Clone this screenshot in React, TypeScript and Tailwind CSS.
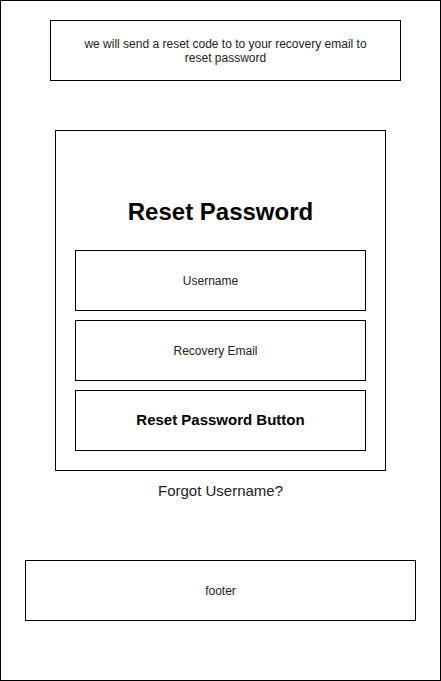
import React from 'react'

const Field = ({ children, bold, className = '' }: { children: React.ReactNode; bold?: boolean; className?: string }) => (
  <div
    className={`flex h-[61px] w-[291px] items-center justify-center border border-black ${
      bold ? 'text-[15px] font-bold text-black' : 'text-[12px] text-[#222]'
    } ${className}`}
  >
    {children}
  </div>
)

const App = () => {
  return (
    <div className="h-[681px] w-[441px] border border-black bg-white font-['Liberation_Sans',Arial,sans-serif]">
      <div className="ml-[49px] mt-[19px] flex h-[61px] w-[351px] items-center justify-center border border-black px-8 text-center text-[12px] leading-[14px] text-[#222]">
        we will send a reset code to to your recovery email to reset password
      </div>

      <div className="ml-[54px] mt-[49px] flex h-[341px] w-[331px] flex-col items-center border border-black px-[19px]">
        <h1 className="flex h-[119px] items-center pt-[42px] text-[24px] font-bold text-black">
          Reset Password
        </h1>
        <div className="flex flex-col gap-[9px]">
          <Field className="pr-[20px]">Username</Field>
          <Field className="pr-[10px]">Recovery Email</Field>
          <Field bold>Reset Password Button</Field>
        </div>
      </div>

      <p className="mt-[11px] w-[439px] text-center text-[15px] leading-[18px] text-[#222]">Forgot Username?</p>

      <div className="ml-[24px] mt-[60px] flex h-[61px] w-[391px] items-center justify-center border border-black text-[12px] text-[#222]">
        footer
      </div>
    </div>
  )
}

export default App
